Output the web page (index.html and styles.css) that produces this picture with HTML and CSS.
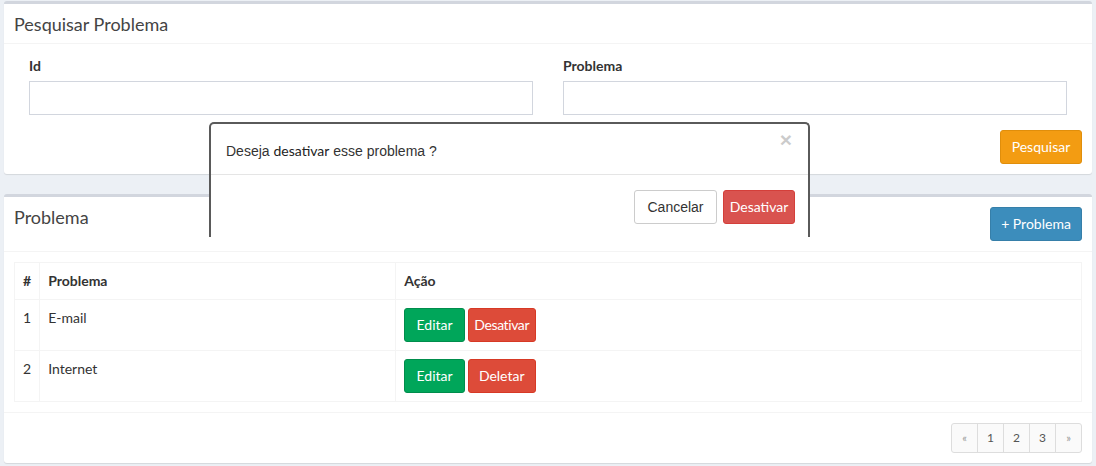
FILE: index.html
```html
<!DOCTYPE html>
<html lang="pt">
<head>
<meta charset="utf-8">
<title>Problema</title>
<link rel="stylesheet" href="styles.css">
</head>
<body>
<div class="content">
  <div class="box">
    <div class="box-header">
      <h3 class="box-title">Pesquisar Problema</h3>
    </div>
    <div class="box-body">
      <div class="row">
        <div class="col">
          <label class="label">Id</label>
          <input class="input" type="text">
        </div>
        <div class="col">
          <label class="label">Problema</label>
          <input class="input" type="text">
        </div>
      </div>
      <div class="actions">
        <button class="btn btn-warning">Pesquisar</button>
      </div>
    </div>
  </div>

  <div class="box">
    <div class="box-header header-flex">
      <h3 class="box-title">Problema</h3>
      <button class="btn btn-primary">+ Problema</button>
    </div>
    <div class="box-body">
      <table class="table">
        <thead>
          <tr><th class="c-id">#</th><th class="c-prob">Problema</th><th>Ação</th></tr>
        </thead>
        <tbody>
          <tr>
            <td>1</td><td>E-mail</td>
            <td><button class="btn btn-success">Editar</button> <button class="btn btn-danger btn-narrow">Desativar</button></td>
          </tr>
          <tr>
            <td>2</td><td>Internet</td>
            <td><button class="btn btn-success">Editar</button> <button class="btn btn-danger btn-del">Deletar</button></td>
          </tr>
        </tbody>
      </table>
    </div>
    <div class="box-footer">
      <ul class="pagination">
        <li>«</li><li>1</li><li>2</li><li>3</li><li>»</li>
      </ul>
    </div>
  </div>
</div>

<div class="modal">
  <div class="modal-header">
    <p class="modal-text">Deseja <span class="ss">desativar</span> esse problema ?</p>
    <span class="close">×</span>
  </div>
  <div class="modal-footer">
    <button class="btn btn-default">Cancelar</button>
    <button class="btn btn-modal-danger">Desativar</button>
  </div>
</div>
</body>
</html>
```
FILE: styles.css
```css
* { box-sizing: border-box; }
html, body { margin: 0; padding: 0; }
body {
  background: #ecf0f5;
  font-family: Lato, "Open Sans", sans-serif;
  font-size: 14px;
  color: #333;
  width: 1096px;
  height: 466px;
  overflow: hidden;
  position: relative;
}
.content { padding: 1px 4px 0 4px; }
.box {
  background: #fff;
  border-top: 3px solid #d2d6de;
  border-radius: 3px;
  box-shadow: 0 1px 1px rgba(0,0,0,0.1);
  margin-bottom: 20px;
}
.box-header {
  padding: 10px;
  border-bottom: 1px solid #f4f4f4;
}
.header-flex {
  display: flex;
  justify-content: space-between;
  align-items: flex-start;
}
.box-title {
  margin: 0;
  font-size: 18px;
  font-weight: 400;
  line-height: 1;
  color: #444;
  padding-top: 1px;
}
.box-body { padding: 10px; }
.row { display: flex; }
.col { flex: 1; padding: 0 15px; display: flex; flex-direction: column; }
.label {
  font-weight: 700;
  line-height: 20px;
  margin-bottom: 5px;
  margin-top: 2px;
  color: #333;
}
.input {
  height: 34px;
  border: 1px solid #d2d6de;
  border-radius: 0;
  padding: 6px 12px;
  font: inherit;
}
.actions {
  display: flex;
  justify-content: flex-end;
  margin-top: 15px;
}
.btn {
  display: inline-block;
  font-family: inherit;
  font-size: 14px;
  line-height: 20px;
  height: 34px;
  padding: 6px 0;
  border: 1px solid transparent;
  border-radius: 3px;
  color: #fff;
  cursor: pointer;
  text-align: center;
}
.btn-warning { background: #f39c12; border-color: #e08e0b; width: 82px; }
.btn-primary { background: #3c8dbc; border-color: #367fa9; width: 92px; }
.btn-success { background: #00a65a; border-color: #008d4c; width: 61px; }
.btn-danger { background: #dd4b39; border-color: #d73925; width: 68px; }
.btn-narrow { letter-spacing: -0.4px; }
.table {
  width: 100%;
  border-collapse: collapse;
  border: 1px solid #f4f4f4;
}
.table th, .table td {
  border: 1px solid #f4f4f4;
  padding: 8px;
  line-height: 20px;
  text-align: left;
  vertical-align: top;
  color: #333;
}
.table th { font-weight: 700; }
.c-id { width: 25px; }
.c-prob { width: 356px; }
.table td .btn { margin-right: -1px; }
.box-footer {
  border-top: 1px solid #f4f4f4;
  padding: 10px;
  display: flex;
  justify-content: flex-end;
}
.pagination {
  display: flex;
  list-style: none;
  margin: 0;
  padding: 0;
}
.pagination li {
  height: 30px;
  width: 27px;
  line-height: 28px;
  font-size: 12px;
  text-align: center;
  background: #fafafa;
  color: #555;
  border: 1px solid #ddd;
  margin-left: -1px;
}
.pagination li:first-child { border-radius: 3px 0 0 3px; color: #999; font-size: 11px; width: 27px; }
.pagination li:last-child { border-radius: 0 3px 3px 0; color: #999; font-size: 11px; width: 27px; }

.modal {
  position: absolute;
  left: 209px;
  top: 122px;
  width: 601px;
  height: 115px;
  background: #fff;
  border: 2px solid #5a5a5a;
  border-bottom: 0;
  border-radius: 5px 5px 0 0;
  overflow: hidden;
}
.modal-header {
  position: relative;
  height: 51px;
  border-bottom: 1px solid #e5e5e5;
  padding: 17px 15px 0 15px;
}
.modal-text {
  margin: 0;
  font-family: "Liberation Sans", Arial, sans-serif;
  font-size: 14px;
  line-height: 20px;
  color: #333;
}
.ss { font-family: Lato, sans-serif; color: #222; }
.close {
  position: absolute;
  right: 16px;
  top: 4px;
  font-family: "Liberation Sans", Arial, sans-serif;
  font-size: 21px;
  font-weight: 700;
  color: #000;
  opacity: 0.2;
}
.modal-footer {
  display: flex;
  justify-content: flex-end;
  gap: 6px;
  padding: 15px 13px;
}
.btn-default {
  background: #fff;
  border-color: #ccc;
  color: #333;
  font-family: "Liberation Sans", Arial, sans-serif;
  width: 83px;
}
.btn-modal-danger {
  background: #d9534f;
  border-color: #d43f3a;
  width: 72px;
}
```
